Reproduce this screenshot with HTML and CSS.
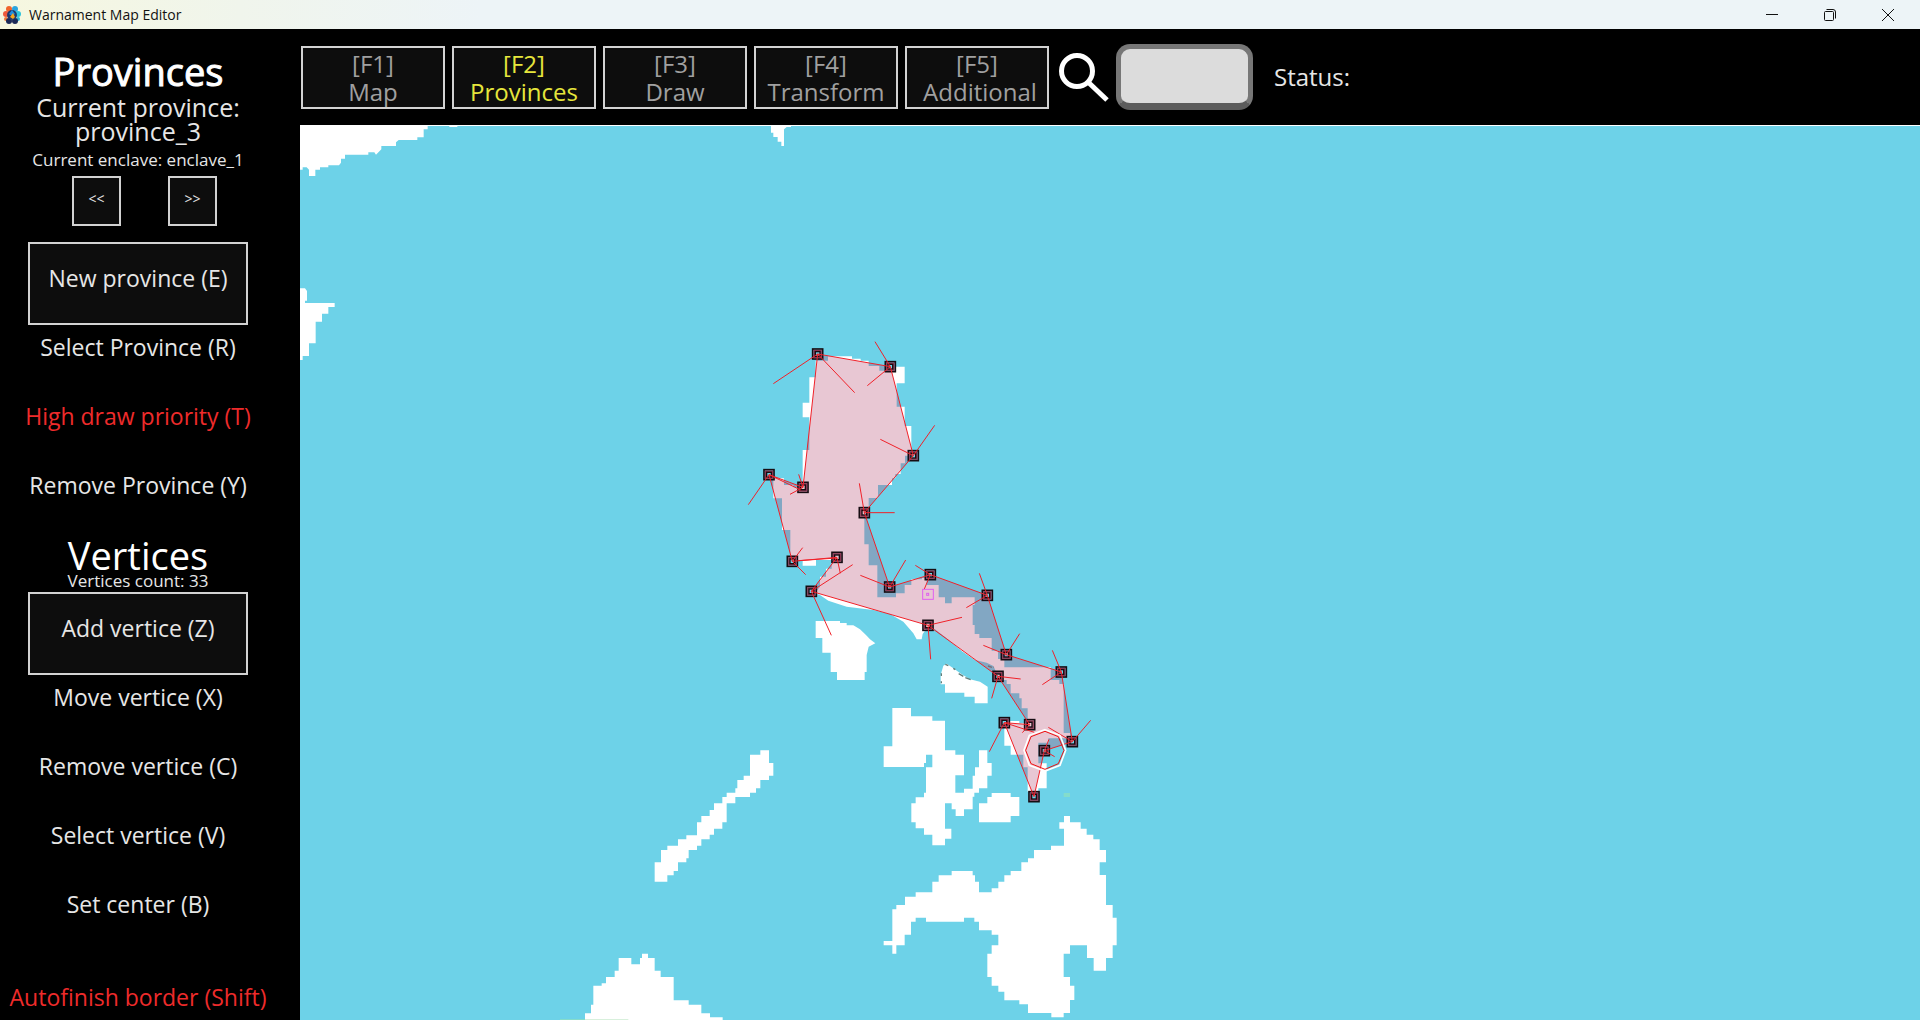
FILE: index.html
```html
<!DOCTYPE html>
<html lang="en">
<head>
<meta charset="utf-8">
<title>Warnament Map Editor</title>
<link rel="stylesheet" href="styles.css">
</head>
<body>
<header class="titlebar">
  <svg class="app-icon" width="20" height="20" viewBox="0 0 20 20" aria-hidden="true">
    <circle cx="7" cy="4" r="3" fill="#f0642c"/>
    <circle cx="13" cy="4" r="3" fill="#2aa5e0"/>
    <circle cx="4" cy="9" r="3" fill="#ee5a3a"/>
    <circle cx="16" cy="9" r="3" fill="#2cc4dc"/>
    <circle cx="4" cy="14" r="2" fill="#ee7a3a"/>
    <circle cx="16" cy="14" r="2" fill="#2bb6d8"/>
    <circle cx="7" cy="16" r="3" fill="#1b2a58"/>
    <circle cx="13" cy="16" r="3" fill="#1b2a58"/>
    <circle cx="10" cy="10" r="5" fill="#21396a"/>
    <path d="M7 9l3-4 3 4-3 2z" fill="#1d8de0"/>
    <path d="M8 12l3-4 2 4-2 2z" fill="#f4a51f"/>
  </svg>
  <span class="title">Warnament Map Editor</span>
  <div class="window-controls">
    <button class="win" aria-label="Minimize"><svg width="12" height="12" viewBox="0 0 12 12"><path d="M0 5.5h12"/></svg></button>
    <button class="win" aria-label="Restore"><svg width="12" height="12" viewBox="0 0 12 12"><rect x=".5" y="2.5" width="9" height="9" rx="1"/><path d="M2.500 .5H9a2.500 2.500 0 0 1 2.500 2.500v6.500"/></svg></button>
    <button class="win" aria-label="Close"><svg width="12" height="12" viewBox="0 0 12 12"><path d="M0 0l12 12M12 0L0 12"/></svg></button>
  </div>
</header>

<div class="editor">
  <aside class="sidebar">
    <h1 class="heading strong">Provinces</h1>
    <p class="current">Current province: province_3</p>
    <p class="small">Current enclave: enclave_1</p>
    <div class="pager">
      <button class="framed step">&lt;&lt;</button>
      <button class="framed step">&gt;&gt;</button>
    </div>
    <button class="framed main">New province (E)</button>
    <div class="actions">
      <button class="action">Select Province (R)</button>
      <button class="action alert">High draw priority (T)</button>
      <button class="action">Remove Province (Y)</button>
    </div>
    <h2 class="heading">Vertices</h2>
    <p class="small count">Vertices count: 33</p>
    <button class="framed main">Add vertice (Z)</button>
    <div class="actions">
      <button class="action">Move vertice (X)</button>
      <button class="action">Remove vertice (C)</button>
      <button class="action">Select vertice (V)</button>
      <button class="action">Set center (B)</button>
    </div>
    <button class="action alert finish">Autofinish border (Shift)</button>
  </aside>

  <main class="workspace">
    <nav class="toolbar">
      <button class="framed tab">[F1]<br>Map</button>
      <button class="framed tab selected">[F2]<br>Provinces</button>
      <button class="framed tab">[F3]<br>Draw</button>
      <button class="framed tab">[F4]<br>Transform</button>
      <button class="framed tab shifted"><span>[F5]</span><span class="long">Additional</span></button>
      <label class="search">
        <svg width="50" height="50" viewBox="0 0 50 50" role="img" aria-label="Search"><circle cx="18" cy="19" r="15.500"/><path d="M29 30L48 48"/></svg>
        <input class="search-box" type="text">
      </label>
      <span class="status">Status:</span>
    </nav>

    <svg class="map" role="img" aria-label="Province map">
      <defs>
        <g id="vertex">
          <rect x="-15" y="-15" width="30" height="30" stroke="#160c12" stroke-width="5"/>
          <rect x="-10" y="-10" width="20" height="20" stroke="#8a3550" stroke-width="5"/>
          <rect x="-7" y="-7" width="14" height="14" stroke="#160c12" stroke-width="4"/>
        </g>
      </defs>
      <g transform="translate(-300 -125)">
        <!-- Land -->
        <g class="land">
          <path d="M300 125H1920V126H300z"/>
          <g transform="translate(290 110) scale(.33333)">
            <path d="M30 45H415V48H413V58H401V82H382V90H326L318 97V108H274V118L258 134L253 127H235V134H165V146H153V158L147 166H115V172H90V179H76V198H57V179L50 172H38V179H30z"/>
            <path d="M478 45H502V51H478zM30 535H45L51 543V572H45V579H134V591H115V611H96V635H77V700H57V738H38V750H30z"/>
            <path d="M1443 45V68H1450V81H1463V95H1474V108H1482V58L1490 51H1503V45z"/>
          </g>
          <g transform="translate(560 880) scale(.33333)">
            <path d="M75 420V400H93V374H100V317H125V310H138V291H164V272H176V234H214V253H240V234H246V221H264V234H284V272H302V291H341V361H386V374H424V400H450V412H488V420z"/>
            <path fill="#84dccb" d="M0 417H75V420H0z"/>
            <path fill="#d8f0dc" d="M75 417H205V420H75z"/>
          </g>
          <g transform="translate(640 690) scale(.33333)">
            <path d="M757 54H813V79H877V92H915V181H946V194H972V256H946V308H972V296H998V257H1005V232H1017V181H1042V219H1055V257H1042V295H1017V308H1003V320H998V358H972V378H947V358H935V340H915V416H934V446H915V466H877V434H852V415H827V397H814V340H827V322H852V308H858V232H877V194H858V219H852V231H731V169H757z"/>
            <path d="M1055 309H1112V321H1138V378H1112V397H1017V340H1042V321H1055z"/>
            <path fill="#84dccb" d="M1271 309H1290V321H1271z"/>
            <path d="M1272 378H1290V397H1322V416H1340V434H1360V448H1379V480H1398V517H1379V555H1398V645H1418V683H1430V766H1418V804H1398V842H1361V804H1341V766H1290V791H1271V861H1290V887H1303V930H1290V969H1271V982H1234V969H1164V943H1138V931H1093V905H1075V887H1055V861H1042V791H1055V766H1075V734H1055V721H1017V695H1003V683H972V695H858V683H827V695H813V734H794V766H769V791H757V766H731V753H757V658H769V645H795V620H827V607H877V575H896V556H935V543H998V556H1005V575H1017V607H1055V595H1075V575H1093V556H1112V543H1144V517H1164V505H1182V480H1233V467H1272V416H1258V397H1272z"/>
            <path d="M361 181H387V219H400V257H387V270H361V295H348V308H330V321H286V340H260V397H247V416H222V434H209V448H184V467H171V480H146V505H139V517H114V543H101V556H82V575H44V517H63V480H82V467H114V448H139V436H171V397H184V378H209V360H222V340H247V321H260V308H286V295H292V270H311V257H330V194H361z"/>
          </g>
          <g transform="translate(780 540) scale(.33333)">
            <path d="M107 243H180V249H200V256H220L240 268L258 285L270 298L286 310L266 320L260 345V396H254V420H171V396H152V338H127V294H107z"/>
            <path d="M490 377L500 371L520 385L545 403L570 418L600 425L623 440V490H584V470H553V458H495V433H482V405z"/>
            <path class="specks" d="M496 373L505 377M520 385L526 389M536 401L550 409M556 413L572 419M484 400V408M484 424V430M624 378L636 382M640 380L652 386"/>
          </g>
          <g transform="translate(740 330) scale(.33333)">
            <path d="M264 92V79H336V86H362V92H386V108H418V122H468V110H494V160H470V230H494V288H514V377H495V400H482V432H466V445H456V465H414V504H386V530H373V643H386V706H412V802H468V790H494V765H514V748H546V744H560V765H580V765H596V802H615V820H635V802H704V825H698V885H704V912H718V924H755V962H774V987H793V1012H932V1050H958V1062H971V1209H990V1225H925V1238H895V1300H920V1375H895V1385H863V1312H850V1274H812V1247H793V1178L813 1173H838V1180H863V1135H845V1105H838V1090H812V1062H800V1050H780L760 1008L740 998L705 990L668 965L620 925L585 898L564 890L548 912L545 928H530L520 910L490 875L450 852L400 840L320 830L265 812L240 795L225 790L240 770V740H258V716H275V690H228V707H188V690H151V600H126V505H100V445H132V465H160V472H188V360H208V262H188V218H208V142H227V92z"/>
          </g>
        </g>

        <!-- Selected province, its border and vertices -->
        <g transform="translate(740 330) scale(.33333)">
          <path class="province" d="M233 72L451 110L520 377L373 548L449 771L571 734L742 796L799 974L964 1026L997 1235L913 1262L882 1400L793 1178L869 1184L774 1039L564 886L214 784L291 682L157 694L87 434L189 472z"/>
          <g class="handles">
            <use href="#vertex" x="233" y="72"/><use href="#vertex" x="451" y="110"/><use href="#vertex" x="520" y="377"/>
            <use href="#vertex" x="373" y="548"/><use href="#vertex" x="449" y="771"/><use href="#vertex" x="571" y="734"/>
            <use href="#vertex" x="742" y="796"/><use href="#vertex" x="799" y="974"/><use href="#vertex" x="964" y="1026"/>
            <use href="#vertex" x="997" y="1235"/><use href="#vertex" x="913" y="1262"/><use href="#vertex" x="882" y="1400"/>
            <use href="#vertex" x="793" y="1178"/><use href="#vertex" x="869" y="1184"/><use href="#vertex" x="774" y="1039"/>
            <use href="#vertex" x="564" y="886"/><use href="#vertex" x="214" y="784"/><use href="#vertex" x="291" y="682"/>
            <use href="#vertex" x="157" y="694"/><use href="#vertex" x="87" y="434"/><use href="#vertex" x="189" y="472"/>
          </g>
          <path class="border" d="M233 72L451 110L520 377L373 548L449 771L571 734L742 796L799 974L964 1026L997 1235L913 1262L882 1400L793 1178L869 1184L774 1039L564 886L214 784L291 682L157 694L87 434L189 472z"/>
          <path class="border" d="M100 161L233 72L344 188M405 35L451 110L382 167M584 286L520 377L421 328M358 460L373 548H464M497 690L449 771L361 736M526 706L571 734L553 777M718 730L742 796L679 833M839 911L799 974L730 946M937 961L964 1026L907 1064M1052 1171L997 1235L925 1192M927 1228L913 1262L944 1280M748 1265L793 1178L883 1207M869 1184L847 1208M842 1047L774 1039L755 1105M666 862L564 886L572 988M338 704L214 784L274 916M301 730L291 684L175 692M188 653L157 694L197 734M25 524L87 434L182 480M176 433L189 472L150 493"/>
          <path class="halo" d="M915 1199L960 1216L977 1261L960 1306L915 1323L868 1306L852 1261L868 1216z"/>
          <path class="ring" d="M915 1204L955 1220L972 1261L955 1301L915 1318L873 1301L857 1261L873 1220z"/>
          <g class="center"><rect x="548" y="778" width="32" height="30"/><rect x="560" y="790" width="6" height="6"/></g>
        </g>
      </g>
    </svg>
  </main>
</div>
</body>
</html>
```
FILE: styles.css
```css
* { box-sizing: border-box; }

body {
  margin: 0;
  height: 100vh;
  display: flex;
  flex-direction: column;
  overflow: hidden;
  background: #000;
  color: #e6e6e6;
  font-family: "Open Sans", "Noto Sans", sans-serif;
  font-size: 23px;
}

h1, h2, p { margin: 0; }

button {
  margin: 0;
  padding: 0;
  border: 0;
  background: none;
  color: inherit;
  font: inherit;
}

/* Window title bar */
.titlebar {
  flex: none;
  height: 29px;
  display: flex;
  align-items: center;
  gap: 7px;
  padding-left: 2px;
  background: linear-gradient(90deg, #f6f7df 0, #f0f5ec 240px, #edf4f7 480px);
  color: #111;
}
.title { font: 14px/20px "Open Sans", sans-serif; }
.window-controls { display: flex; margin-left: auto; padding-right: 3px; }
.win { width: 58px; height: 28px; display: grid; place-items: center; }
.win svg { fill: none; stroke: #111; overflow: visible; }

.editor { flex: 1; min-height: 0; display: flex; }

/* Left panel */
.sidebar {
  flex: none;
  width: 300px;
  padding: 26px 24px 0 0;
  display: flex;
  flex-direction: column;
  align-items: center;
  text-align: center;
}
.heading { font-size: 38px; line-height: 32px; font-weight: 400; color: #fff; }
.strong { -webkit-text-stroke: 1px #fff; }
.current { width: 220px; line-height: 24px; font-size: 25px; margin-top: 8px; }
.small { font-size: 17px; line-height: 20px; margin-top: 7px; }
.pager { display: flex; gap: 47px; margin: 6px 0 16px 13px; }
.framed { background: #0d0d0d; border: 2px solid #d2d2d2; }
.step { width: 49px; height: 50px; padding-bottom: 5px; font-size: 14px; }
.main { width: 220px; height: 83px; padding-bottom: 12px; flex: none; }
.actions { display: flex; flex-direction: column; gap: 24px; margin-bottom: 31px; }
.action { height: 45px; padding-bottom: 2px; white-space: nowrap; }
.alert { color: #ee2b2b; }
.count { margin: 0 0 1px; }
.finish { height: 40px; margin-top: 20px; }

/* Top bar */
.workspace { flex: 1; min-width: 0; display: flex; flex-direction: column; }
.toolbar {
  flex: none;
  height: 96px;
  padding-left: 1px;
  display: flex;
  align-items: center;
  gap: 7px;
}
.tab { width: 144px; height: 63px; padding-top: 1px; line-height: 28px; font-size: 24px; color: #a0a0a0; }
.selected { color: #e6e63c; }
.shifted { display: flex; flex-direction: column; align-items: center; justify-content: center; }
.long { padding-left: 6px; }
.search { display: flex; align-items: center; gap: 7px; margin-left: 3px; }
.search svg { fill: none; stroke: #fff; stroke-width: 5; }
.search-box {
  width: 137px;
  height: 66px;
  border: 5px solid #777;
  border-bottom: 7px solid #5c5c5c;
  border-radius: 14px;
  background: #dcdcdc;
}
.status { margin-left: 14px; padding-bottom: 2px; font-size: 24px; }

/* Map */
.map { flex: 1; min-height: 0; width: 100%; display: block; background: #6dd2e8; }
.land { fill: #fff; }
.specks { fill: none; stroke: #607f7b; stroke-width: 4; }
.province { fill: #b2446c; fill-opacity: .3; }
.handles { fill: none; }
.border { fill: none; stroke: #f02028; stroke-width: 3; }
.halo { fill: none; stroke: #fff; stroke-width: 5; }
.ring { fill: none; stroke: #f01010; stroke-width: 3; }
.center { fill: none; stroke: #e060f0; stroke-width: 3; }
```
